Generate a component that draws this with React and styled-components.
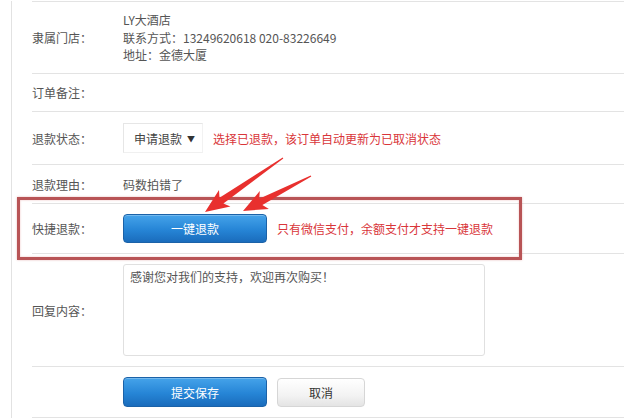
import React from "react";
import styled, { createGlobalStyle } from "styled-components";

const Global = createGlobalStyle`
  html, body { margin: 0; padding: 0; background: #fff; }
  body { font-family: "Noto Sans CJK SC", "Noto Sans", sans-serif; font-size: 12px; color: #555; }
  * { box-sizing: border-box; }
`;

const Page = styled.div`
  position: relative;
  width: 624px;
  height: 418px;
  overflow: hidden;
  padding-top: 1px;
`;

const Panel = styled.div`
  margin-left: 11px;
  border-left: 1px solid #e2e2e2;
  padding-left: 20px;
  min-height: 430px;
`;

const Row = styled.div`
  position: relative;
  display: grid;
  grid-template-columns: 91px 1fr;
  align-items: center;
  height: ${(p) => p.$h}px;
  border-bottom: 1px solid #e3e3e3;
  ${(p) => (p.$first ? "border-top: 1px solid #e3e3e3;" : "")}
`;

const Label = styled.div`
  color: #555;
  line-height: 17px;
`;

const Value = styled.div`
  display: flex;
  align-items: center;
  gap: ${(p) => p.$gap || 0}px;
  color: #555;
  line-height: 17px;
`;

const Lines = styled.div`
  display: flex;
  flex-direction: column;
  line-height: 17.5px;
  color: #555;
`;

const Select = styled.div`
  width: 80px;
  height: 30px;
  border: 1px solid #e6e6e6;
  border-right-color: #f2f2f2;
  border-bottom-color: #f0f0f0;
  display: flex;
  align-items: center;
  justify-content: space-between;
  padding: 0 7px 0 10px;
  color: #444;
  background: #fff;
`;

const Caret = styled.span`
  font-size: 8px;
  color: #333;
`;

const Warn = styled.span`
  color: #d9363a;
`;

const Btn = styled.button`
  font-family: inherit;
  font-size: 12px;
  width: ${(p) => p.$w}px;
  height: ${(p) => p.$hh || 29}px;
  border-radius: 4px;
  cursor: pointer;
  padding: 0;
  ${(p) =>
    p.$primary
      ? `
    color: #fff;
    border: 1px solid #1b62a8;
    background: linear-gradient(#45a3ea, #2685d6 55%, #1a6cbc);
    box-shadow: inset 0 1px 0 rgba(255,255,255,0.25);
  `
      : `
    color: #333;
    border: 1px solid #d6d6d6;
    background: linear-gradient(#ffffff, #f3f3f3 60%, #e4e4e4);
  `}
`;

const TextArea = styled.div`
  width: 362px;
  height: 92px;
  border: 1px solid #e0e0e0;
  border-radius: 3px;
  padding: 3px 6px;
  color: #555;
  line-height: 17px;
  align-self: start;
  margin-top: 10px;
`;

const Highlight = styled.div`
  position: absolute;
  left: -15px;
  top: -7px;
  width: 505px;
  height: 63px;
  border: 3.5px solid #b85456;
  box-shadow: inset 0 0 2px rgba(220, 120, 120, 0.5), 0 0 2px rgba(200,90,90,0.4);
  pointer-events: none;
`;

const Overlay = styled.svg`
  position: absolute;
  left: 0;
  top: 0;
  pointer-events: none;
`;

function arrowPoints(tx, ty, px, py, headLen, headHalf, shaftHalf, tailHalf) {
  const dx = px - tx;
  const dy = py - ty;
  const len = Math.hypot(dx, dy);
  const ux = dx / len;
  const uy = dy / len;
  const nx = -uy;
  const ny = ux;
  const bx = px - headLen * ux;
  const by = py - headLen * uy;
  const pts = [
    [tx + tailHalf * nx, ty + tailHalf * ny],
    [bx + shaftHalf * nx, by + shaftHalf * ny],
    [bx + headHalf * nx - 4 * ux, by + headHalf * ny - 4 * uy],
    [px, py],
    [bx - headHalf * nx - 4 * ux, by - headHalf * ny - 4 * uy],
    [bx - shaftHalf * nx, by - shaftHalf * ny],
    [tx - tailHalf * nx, ty - tailHalf * ny],
  ];
  return pts.map((p) => p.map((v) => v.toFixed(1)).join(",")).join(" ");
}

function Arrow({ tail, tip }) {
  return (
    <polygon
      points={arrowPoints(tail[0], tail[1], tip[0], tip[1], 20, 10, 3.5, 0.6)}
      fill="#e8302e"
    />
  );
}

export default function App() {
  return (
    <>
      <Global />
      <Page>
        <Panel>
          <Row $h={73} $first>
            <Label>隶属门店：</Label>
            <Lines>
              <span>LY大酒店</span>
              <span>联系方式：13249620618 020-83226649</span>
              <span>地址：金德大厦</span>
            </Lines>
          </Row>
          <Row $h={38}>
            <Label>订单备注：</Label>
            <Value />
          </Row>
          <Row $h={53}>
            <Label>退款状态：</Label>
            <Value $gap={10}>
              <Select>
                <span>申请退款</span>
                <Caret>▼</Caret>
              </Select>
              <Warn>选择已退款，该订单自动更新为已取消状态</Warn>
            </Value>
          </Row>
          <Row $h={39}>
            <Label>退款理由：</Label>
            <Value>码数拍错了</Value>
          </Row>
          <Row $h={50}>
            <Label>快捷退款：</Label>
            <Value $gap={10}>
              <Btn $primary $w={144} $hh={29}>一键退款</Btn>
              <Warn>只有微信支付，余额支付才支持一键退款</Warn>
            </Value>
            <Highlight />
          </Row>
          <Row $h={113}>
            <Label>回复内容：</Label>
            <TextArea>感谢您对我们的支持，欢迎再次购买！</TextArea>
          </Row>
          <Row $h={51}>
            <Label />
            <Value $gap={10}>
              <Btn $primary $w={144} $hh={30}>提交保存</Btn>
              <Btn $w={88} $hh={29}>取消</Btn>
            </Value>
          </Row>
        </Panel>
        <Overlay width="624" height="418" viewBox="0 0 624 418">
          <Arrow tail={[283, 158]} tip={[205, 212]} />
          <Arrow tail={[311, 176]} tip={[243, 211]} />
        </Overlay>
      </Page>
    </>
  );
}
